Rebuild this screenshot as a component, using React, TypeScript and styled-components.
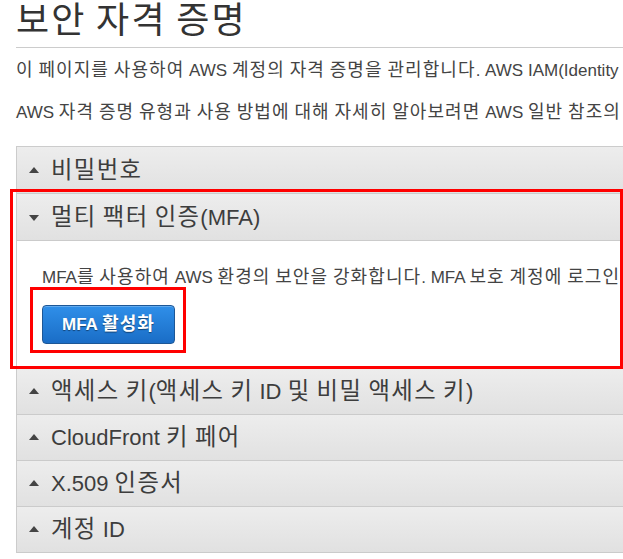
import React from "react";
import styled, { createGlobalStyle } from "styled-components";

const Global = createGlobalStyle`
  html, body {
    margin: 0;
    padding: 0;
    background: #fff;
    overflow: hidden;
  }
  body {
    font-family: "Liberation Sans", Arial, "Noto Sans CJK KR", sans-serif;
    color: #444;
  }
`;

const Page = styled.div`
  position: relative;
  width: 1000px;
  padding: 0 0 0 16px;
  box-sizing: border-box;
`;

const Title = styled.h1`
  margin: 0;
  padding-top: 1px;
  font-size: 34px;
  line-height: 40px;
  font-weight: normal;
  color: #333;
`;

const Rule = styled.hr`
  margin: 6px 0 0;
  border: 0;
  border-top: 1px solid #ccc;
`;

const Text = styled.p`
  margin: 0;
  font-size: 17px;
  line-height: 22px;
  white-space: nowrap;
  color: #444;
`;

const Intro = styled.div`
  display: flex;
  flex-direction: column;
  gap: 19px;
  padding-top: 11px;
`;

const Panels = styled.div`
  margin-top: 22px;
  border-left: 1px solid #ccc;
  border-top: 1px solid #ccc;
`;

const Header = styled.div<{ $tall?: boolean }>`
  height: ${(p) => (p.$tall ? 46 : 45)}px;
  display: flex;
  align-items: center;
  gap: 12px;
  padding-left: 12px;
  background: linear-gradient(#ededed, #e1e1e1);
  border-bottom: 1px solid #cbcbcb;
  font-size: 22px;
  line-height: 26px;
  color: #3d3d3d;
  white-space: nowrap;
`;

const Arrow = styled.span<{ $open?: boolean }>`
  width: 0;
  height: 0;
  border-left: 5px solid transparent;
  border-right: 5px solid transparent;
  ${(p) =>
    p.$open
      ? "border-top: 6px solid #444; margin-top: 1px;"
      : "border-bottom: 6px solid #444; margin-top: -1px;"}
`;

const Body = styled.div`
  background: #fff;
  padding: 25px 0 24px 25px;
  height: 128px;
  box-sizing: border-box;
  border-bottom: 1px solid #ddd;
`;

const Button = styled.button`
  margin-top: 16px;
  width: 133px;
  height: 39px;
  border: 1px solid #1d5796;
  border-radius: 4px;
  background: linear-gradient(#2f8fe9, #1a6dc6);
  color: #fff;
  font-family: "Liberation Sans", Arial, "Noto Sans CJK KR", sans-serif;
  font-weight: bold;
  font-size: 17px;
  line-height: 20px;
  text-shadow: 0 1px 1px rgba(0, 0, 0, 0.45);
  box-shadow: inset 0 1px 0 rgba(255, 255, 255, 0.25);
  cursor: pointer;
`;

// hangul runs are a touch larger and wider in the reference font
const Ko = styled.span`
  font-size: 1.06em;
  letter-spacing: 0.06em;
`;

const Highlight = styled.div<{ $top: number; $left: number; $w: number; $h: number }>`
  position: absolute;
  top: ${(p) => p.$top}px;
  left: ${(p) => p.$left}px;
  width: ${(p) => p.$w}px;
  height: ${(p) => p.$h}px;
  border: 3px solid #ff0000;
  box-sizing: border-box;
  pointer-events: none;
`;

const K = ({ children }: { children: string }) => (
  <>
    {children
      .split(/([\uAC00-\uD7A3]+)/)
      .map((part, i) => (/[\uAC00-\uD7A3]/.test(part) ? <Ko key={i}>{part}</Ko> : part))}
  </>
);

const sections = [
  "비밀번호",
  "멀티 팩터 인증(MFA)",
  "액세스 키(액세스 키 ID 및 비밀 액세스 키)",
  "CloudFront 키 페어",
  "X.509 인증서",
  "계정 ID",
];

export default function App() {
  return (
    <>
      <Global />
      <Page>
        <Title>
          <K>보안 자격 증명</K>
        </Title>
        <Rule />
        <Intro>
          <Text>
            <K>이 페이지를 사용하여 AWS 계정의 자격 증명을 관리합니다. AWS IAM(Identity</K>
          </Text>
          <Text>
            <K>AWS 자격 증명 유형과 사용 방법에 대해 자세히 알아보려면 AWS 일반 참조의</K>
          </Text>
        </Intro>
        <Panels>
          {sections.map((s, i) => (
            <React.Fragment key={s}>
              <Header $tall={i < 2}>
                <Arrow $open={i === 1} />
                <span>
                  <K>{s}</K>
                </span>
              </Header>
              {i === 1 && (
                <Body>
                  <Text>
                    <K>MFA를 사용하여 AWS 환경의 보안을 강화합니다. MFA 보호 계정에 로그인</K>
                  </Text>
                  <Button>
                    <K>MFA 활성화</K>
                  </Button>
                </Body>
              )}
            </React.Fragment>
          ))}
        </Panels>
        <Highlight $top={189} $left={10} $w={613} $h={180} />
        <Highlight $top={287} $left={30} $w={156} $h={66} />
      </Page>
    </>
  );
}
